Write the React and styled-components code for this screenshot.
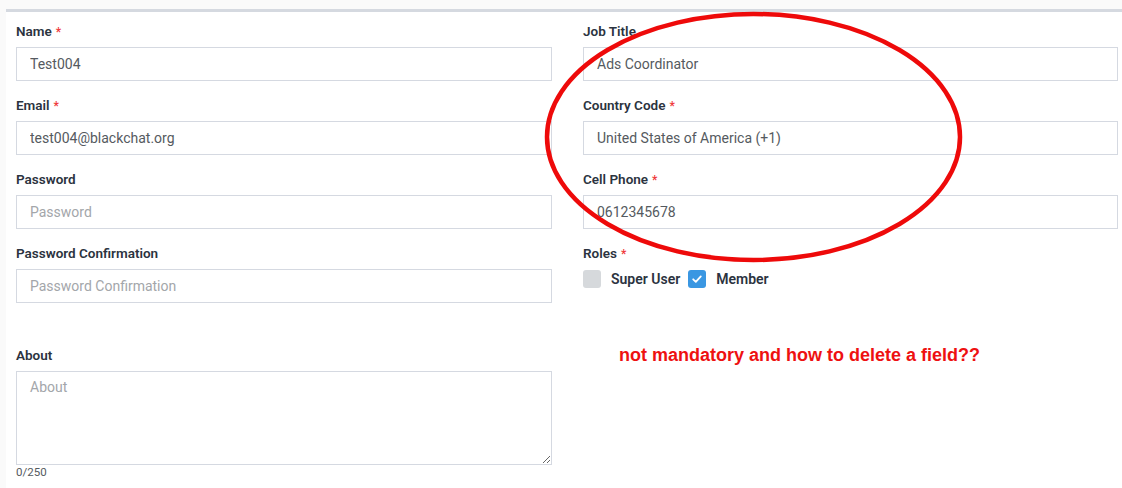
import React from 'react';
import styled, { createGlobalStyle } from 'styled-components';

const GlobalStyle = createGlobalStyle`
  html, body {
    margin: 0;
    padding: 0;
    background: #fafafa;
    font-family: Roboto, "Noto Sans", Arial, sans-serif;
  }
  * {
    box-sizing: border-box;
  }
`;

const leftFields = [
  { label: 'Name', required: true, value: 'Test004' },
  { label: 'Email', required: true, value: 'test004@blackchat.org' },
  { label: 'Password', placeholder: 'Password' },
  { label: 'Password Confirmation', placeholder: 'Password Confirmation' },
];

const rightFields = [
  { label: 'Job Title', value: 'Ads Coordinator' },
  { label: 'Country Code', required: true, value: 'United States of America (+1)' },
  { label: 'Cell Phone', required: true, value: '0612345678' },
];

const roles = [
  { name: 'Super User', checked: false },
  { name: 'Member', checked: true },
];

const Field = ({ label, required, value, placeholder }) => (
  <FieldWrapper>
    <Label>
      {label}
      {required && <Star>*</Star>}
    </Label>
    <Input defaultValue={value} placeholder={placeholder} />
  </FieldWrapper>
);

const App = () => {
  return (
    <Page>
      <GlobalStyle />
      <Card>
        <FormGrid>
          <Column>
            {leftFields.map((f) => (
              <Field key={f.label} {...f} />
            ))}
          </Column>
          <Column>
            {rightFields.map((f) => (
              <Field key={f.label} {...f} />
            ))}
            <FieldWrapper>
              <Label>
                Roles<Star>*</Star>
              </Label>
              <RoleRow>
                {roles.map((r) => (
                  <RoleItem key={r.name}>
                    <CheckBox checked={r.checked}>
                      {r.checked && (
                        <svg width="12" height="12" viewBox="0 0 12 12">
                          <path
                            d="M2.2 6.3 L4.8 8.8 L9.8 3.4"
                            fill="none"
                            stroke="#fff"
                            strokeWidth="1.8"
                            strokeLinecap="round"
                            strokeLinejoin="round"
                          />
                        </svg>
                      )}
                    </CheckBox>
                    <RoleName>{r.name}</RoleName>
                  </RoleItem>
                ))}
              </RoleRow>
            </FieldWrapper>
          </Column>
          <AboutField>
            <Label>About</Label>
            <TextArea placeholder="About" />
            <Counter>0/250</Counter>
          </AboutField>
        </FormGrid>
      </Card>

      <Ellipse width="1122" height="488" viewBox="0 0 1122 488">
        <ellipse
          cx="753.5"
          cy="137"
          rx="206.5"
          ry="123"
          fill="none"
          stroke="#ee0a0a"
          strokeWidth="4.5"
        />
      </Ellipse>
      <Note>not mandatory and how to delete a field??</Note>
    </Page>
  );
};

export default App;

const Page = styled.div`
  position: relative;
  width: 1122px;
  height: 488px;
  overflow: hidden;
  padding: 9px 0 0 6px;
`;

const Card = styled.div`
  background: #fff;
  border-top: 3px solid #d5d9e0;
  padding: 10px 0 0 10px;
  width: 1200px;
  height: 600px;
`;

const FormGrid = styled.div`
  display: grid;
  grid-template-columns: 536px 535px;
  column-gap: 31px;
  align-items: start;
`;

const Column = styled.div`
  display: flex;
  flex-direction: column;
  gap: 15px;
`;

const FieldWrapper = styled.div`
  display: flex;
  flex-direction: column;
`;

const AboutField = styled(FieldWrapper)`
  grid-column: 1;
  margin-top: 43px;
`;

const Label = styled.label`
  display: block;
  height: 18px;
  overflow: visible;
  font-size: 13.5px;
  line-height: 18px;
  font-weight: 600;
  color: #2b3340;
  margin-bottom: 7px;
  white-space: nowrap;
`;

const Star = styled.span`
  color: #ef3b3b;
  margin-left: 4px;
  font-size: 12px;
  line-height: 0;
`;

const Input = styled.input`
  height: 34px;
  width: 100%;
  border: 1px solid #d5d9e1;
  border-radius: 0;
  padding: 0 13px;
  font-family: Roboto, "Noto Sans", Arial, sans-serif;
  font-size: 14px;
  color: #555a60;
  background: #fff;
  outline: none;
  &::placeholder {
    color: #a3a6aa;
  }
`;

const TextArea = styled.textarea`
  height: 94px;
  width: 100%;
  border: 1px solid #d5d9e1;
  border-radius: 0;
  padding: 7px 13px;
  font-family: Roboto, "Noto Sans", Arial, sans-serif;
  font-size: 14px;
  color: #555a60;
  outline: none;
  display: block;
  &::placeholder {
    color: #a3a6aa;
  }
`;

const Counter = styled.div`
  font-size: 11.5px;
  line-height: 14px;
  height: 14px;
  color: #555a60;
`;

const RoleRow = styled.div`
  display: flex;
  align-items: center;
  gap: 8px;
  margin-top: 1px;
`;

const RoleItem = styled.div`
  display: flex;
  align-items: center;
  gap: 10px;
`;

const CheckBox = styled.span`
  width: 18px;
  height: 18px;
  border-radius: 3px;
  display: inline-flex;
  align-items: center;
  justify-content: center;
  background: ${(p) => (p.checked ? '#3a97e2' : '#d6d9dc')};
`;

const RoleName = styled.span`
  font-size: 14px;
  line-height: 18px;
  font-weight: 600;
  color: #2b3340;
`;

const Ellipse = styled.svg`
  position: absolute;
  left: 0;
  top: 0;
  pointer-events: none;
`;

const Note = styled.div`
  position: absolute;
  left: 619px;
  top: 345px;
  font-family: "Liberation Sans", Arial, sans-serif;
  font-weight: bold;
  font-size: 18px;
  line-height: 20px;
  color: #ee1111;
`;
